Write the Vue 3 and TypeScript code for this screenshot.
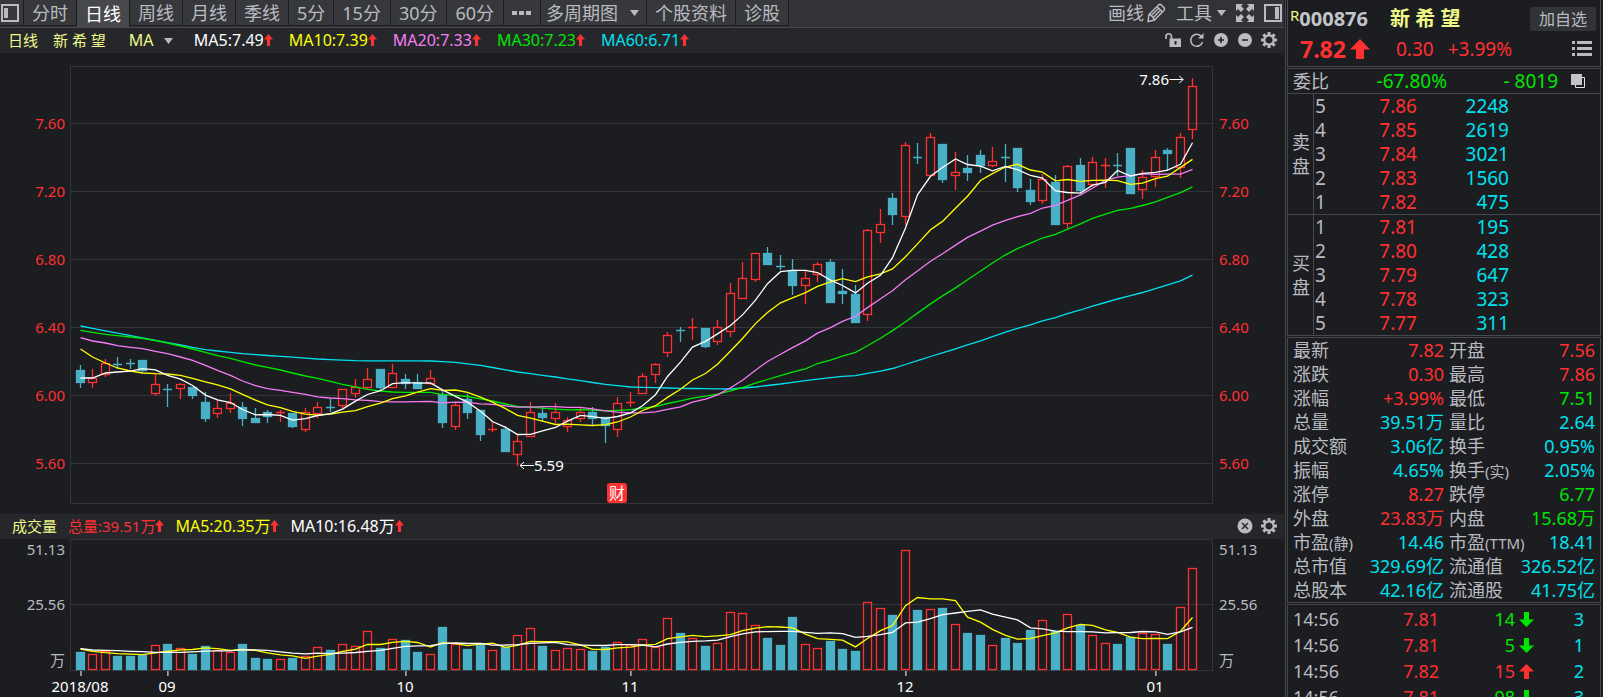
<script setup lang="ts">
type Candle = [up: 0 | 1, high: number, top: number, bottom: number, low: number]

const periods = ['分时', '日线', '周线', '月线', '季线', '5分', '15分', '30分', '60分']
const activePeriod = '日线'

const averages = [
  { text: 'MA5:7.49', tone: 'white' },
  { text: 'MA10:7.39', tone: 'yellow' },
  { text: 'MA20:7.33', tone: 'violet' },
  { text: 'MA30:7.23', tone: 'green' },
  { text: 'MA60:6.71', tone: 'cyan' },
]

// One entry per trading day, in plot units (y grows downwards).
const candles: Candle[] = [
  [0, 365, 370, 383, 388], [1, 369, 378, 383, 388], [1, 359, 363, 375, 377], [0, 357, 364, 365, 369],
  [0, 359, 363, 364, 369], [0, 360, 360, 371, 372], [1, 374, 384, 394, 396], [0, 384, 389, 390, 407],
  [1, 383, 384, 389, 399], [0, 387, 387, 396, 399], [0, 392, 402, 419, 422], [1, 400, 408, 414, 418],
  [1, 393, 403, 409, 413], [0, 402, 407, 419, 426], [0, 408, 418, 423, 423], [0, 410, 412, 417, 423],
  [1, 410, 412, 413, 422], [0, 413, 413, 427, 428], [1, 408, 412, 430, 432], [1, 402, 407, 414, 418],
  [0, 399, 407, 408, 412], [1, 389, 389, 406, 408], [1, 379, 387, 394, 398], [1, 368, 379, 388, 389],
  [0, 369, 369, 388, 390], [1, 364, 373, 388, 388], [0, 374, 379, 384, 389], [0, 374, 382, 389, 389],
  [1, 370, 378, 384, 385], [0, 391, 394, 423, 428], [1, 402, 405, 427, 430], [0, 394, 399, 413, 419],
  [0, 410, 410, 435, 441], [1, 421, 429, 430, 432], [0, 426, 429, 452, 452], [1, 435, 441, 455, 466],
  [1, 402, 412, 437, 437], [0, 407, 413, 418, 422], [1, 403, 412, 419, 423], [1, 417, 420, 427, 432],
  [1, 407, 412, 419, 422], [0, 407, 412, 419, 425], [0, 417, 417, 426, 443], [1, 397, 403, 430, 437],
  [1, 392, 402, 403, 407], [1, 373, 376, 394, 394], [1, 363, 364, 375, 383], [1, 332, 335, 353, 357],
  [0, 327, 330, 331, 342], [1, 318, 327, 328, 340], [0, 328, 328, 347, 348], [1, 320, 327, 342, 345],
  [1, 283, 293, 332, 337], [1, 262, 278, 299, 299], [1, 253, 253, 280, 282], [0, 247, 253, 265, 265],
  [0, 255, 266, 267, 270], [0, 259, 270, 286, 295], [1, 271, 278, 286, 304], [1, 262, 264, 275, 282],
  [0, 259, 262, 303, 303], [0, 269, 291, 294, 304], [0, 285, 294, 323, 323], [1, 229, 230, 315, 321],
  [1, 209, 224, 233, 243], [0, 193, 198, 215, 225], [1, 142, 145, 217, 225], [0, 143, 157, 158, 164],
  [1, 133, 137, 176, 176], [0, 144, 144, 180, 183], [1, 152, 172, 176, 190], [0, 155, 168, 173, 181],
  [0, 150, 155, 166, 173], [1, 147, 161, 166, 167], [0, 144, 157, 158, 182], [0, 148, 148, 188, 192],
  [0, 179, 190, 202, 205], [1, 174, 179, 201, 204], [0, 175, 182, 225, 225], [1, 165, 166, 224, 229],
  [0, 158, 165, 191, 193], [1, 157, 162, 185, 187], [1, 158, 165, 166, 188], [0, 153, 165, 166, 176],
  [0, 148, 148, 194, 194], [1, 170, 177, 190, 199], [1, 150, 157, 177, 187], [0, 148, 150, 154, 171],
  [1, 133, 137, 168, 178], [1, 78, 86, 130, 139],
]

// Top of each volume bar, in thirds of a plot unit.
const volumeTops = [
  457, 462, 455, 469, 468, 466, 436, 433, 445, 463, 440, 450, 457, 433, 475, 479, 478, 474, 468, 443,
  452, 434, 440, 395, 446, 419, 420, 457, 464, 381, 434, 448, 434, 451, 442, 406, 386, 439, 452, 446,
  449, 453, 442, 427, 437, 419, 441, 355, 400, 415, 438, 429, 338, 341, 377, 414, 435, 351, 434, 445,
  424, 448, 453, 308, 326, 347, 152, 330, 328, 325, 374, 400, 405, 437, 415, 431, 390, 361, 395, 342,
  376, 406, 430, 433, 412, 399, 403, 432, 322, 206,
]

const centre = (i: number) => Math.floor(80 + i * 12.5)

// Moving average; the lead covers the days whose window starts before the first bar.
function average(values: number[], span: number, lead: number[]) {
  return values.map((_, i) =>
    i < span - 1 ? lead[i] : values.slice(i - span + 1, i + 1).reduce((a, b) => a + b, 0) / span,
  )
}

function spread(knots: [number, number][]) {
  const out: number[] = []
  for (let k = 0; k < knots.length - 1; k++) {
    const [a, ya] = knots[k]
    const [b, yb] = knots[k + 1]
    for (let i = a; i < b; i++) out[i] = ya + ((yb - ya) * (i - a)) / (b - a)
  }
  return out
}

const toPoints = (ys: number[]) => ys.map((y, i) => `${centre(i) + 0.5},${y.toFixed(1)}`).join(' ')

const closes = candles.map(([up, , top, bottom]) => (up ? top : bottom) + 0.5)
const ma60Lead = spread([
  [0, 326], [5, 338], [10, 349.7], [13, 353.7], [19, 359], [22, 360.7], [28, 361], [30, 362.3], [32, 365.3],
  [35, 372], [38, 377], [42, 384.3], [44, 387], [48, 388.3], [52, 389], [54, 387], [56, 384], [59, 379],
])
const priceLines = [
  { tone: 'cyan', points: toPoints(average(closes, 60, ma60Lead)) },
  {
    tone: 'green',
    points: toPoints(average(closes, 30, [
      330.3, 332.3, 334.3, 335.7, 337, 338.3, 340.7, 343, 346, 349, 352.3, 355.7, 358.3, 361.7, 365, 367.3,
      370, 373, 376, 378.3, 381.3, 384.3, 386.9, 389.3, 391, 392, 392.3, 392.3, 392.3,
    ])),
  },
  {
    tone: 'violet',
    points: toPoints(average(closes, 20, [
      337.7, 341, 343, 345.7, 347.3, 348.7, 351.3, 353.7, 357, 360.3, 365.3, 370.3, 375.3, 381, 385.7, 388.7,
      390.3, 392.3, 394.3,
    ])),
  },
  { tone: 'yellow', points: toPoints(average(closes, 10, [349, 357, 363, 368, 371, 373, 373.7, 374, 375.3])) },
  { tone: 'white', points: toPoints(average(closes, 5, [378, 378, 373, 372])) },
]
const volumeYs = volumeTops.map((v) => 500 + v / 3)
const volumeLines = [
  { tone: 'yellow', points: toPoints(average(volumeYs, 5, [649, 651.3, 652.7, 653.7])) },
  { tone: 'white', points: toPoints(average(volumeYs, 10, [648.7, 650, 650.3, 650.7, 651.3, 651.7, 652.3, 652.3, 652.3])) },
]

const priceTicks = [
  { label: '7.60', y: 123 }, { label: '7.20', y: 191 }, { label: '6.80', y: 259 },
  { label: '6.40', y: 327 }, { label: '6.00', y: 395 }, { label: '5.60', y: 463 },
]
const volumeTicks = [
  { label: '51.13', y: 549 }, { label: '25.56', y: 604 }, { label: '万', y: 660 },
]
const months = [
  { label: '2018/08', i: 0 }, { label: '09', i: 7 }, { label: '10', i: 26 },
  { label: '11', i: 44 }, { label: '12', i: 66 }, { label: '01', i: 86 },
]
const px = (x: number) => `${((x - 70) / 1143) * 100}%`
const py = (y: number) => `${((y - 53) / 461) * 100}%`
const vy = (y: number) => `${((y - 539) / 132) * 100}%`

const books = [
  { side: '卖盘', rows: [['5', '7.86', '2248'], ['4', '7.85', '2619'], ['3', '7.84', '3021'], ['2', '7.83', '1560'], ['1', '7.82', '475']] },
  { side: '买盘', rows: [['1', '7.81', '195'], ['2', '7.80', '428'], ['3', '7.79', '647'], ['4', '7.78', '323'], ['5', '7.77', '311']] },
]

const stats: { name: string; note?: string; value: string; tone: string }[][] = [
  [{ name: '最新', value: '7.82', tone: 'red' }, { name: '开盘', value: '7.56', tone: 'red' }],
  [{ name: '涨跌', value: '0.30', tone: 'red' }, { name: '最高', value: '7.86', tone: 'red' }],
  [{ name: '涨幅', value: '+3.99%', tone: 'red' }, { name: '最低', value: '7.51', tone: 'green' }],
  [{ name: '总量', value: '39.51万', tone: 'cyan' }, { name: '量比', value: '2.64', tone: 'cyan' }],
  [{ name: '成交额', value: '3.06亿', tone: 'cyan' }, { name: '换手', value: '0.95%', tone: 'cyan' }],
  [{ name: '振幅', value: '4.65%', tone: 'cyan' }, { name: '换手', note: '(实)', value: '2.05%', tone: 'cyan' }],
  [{ name: '涨停', value: '8.27', tone: 'red' }, { name: '跌停', value: '6.77', tone: 'green' }],
  [{ name: '外盘', value: '23.83万', tone: 'red' }, { name: '内盘', value: '15.68万', tone: 'green' }],
  [{ name: '市盈', note: '(静)', value: '14.46', tone: 'cyan' }, { name: '市盈', note: '(TTM)', value: '18.41', tone: 'cyan' }],
  [{ name: '总市值', value: '329.69亿', tone: 'cyan' }, { name: '流通值', value: '326.52亿', tone: 'cyan' }],
  [{ name: '总股本', value: '42.16亿', tone: 'cyan' }, { name: '流通股', value: '41.75亿', tone: 'cyan' }],
]

const ticks = [
  { time: '14:56', price: '7.81', volume: '14', up: false, count: '3' },
  { time: '14:56', price: '7.81', volume: '5', up: false, count: '1' },
  { time: '14:56', price: '7.82', volume: '15', up: true, count: '2' },
  { time: '14:56', price: '7.81', volume: '98', up: false, count: '3' },
]
const gearTeeth = [0, 45, 90, 135, 180, 225, 270, 315]
</script>

<template>
  <div class="app">
    <main class="main">
      <nav class="toolbar">
        <button class="tab tab-icon" aria-label="left panel">
          <svg width="20" height="20" viewBox="0 0 20 20"><rect x="2" y="2" width="16" height="16" fill="none" stroke="#b9bbc0" stroke-width="2" /><rect x="4" y="5" width="4" height="10" fill="#b9bbc0" /></svg>
        </button>
        <button v-for="p in periods" :key="p" class="tab" :class="{ active: p === activePeriod, minutes: p.length > 2 }">{{ p }}</button>
        <button class="tab tab-more" aria-label="more">
          <svg width="20" height="6" viewBox="0 0 20 6" fill="#b9bbc0"><path d="M0 1h5v4H0zM7 1h5v4H7zM14 1h5v4h-5z" /></svg>
        </button>
        <label class="tab pick multi">
          <select aria-label="multi period"><option>多周期图</option></select>
          <svg class="caret" width="9" height="6" viewBox="0 0 9 6"><path d="M0 0h9L4.500 6z" fill="#b9bbc0" /></svg>
        </label>
        <button class="tab">个股资料</button>
        <button class="tab">诊股</button>
        <div class="tools">
          <button class="tool draw">画线
            <svg width="20" height="20" viewBox="0 0 20 20" fill="none" stroke="#b9bbc0" stroke-width="1.500"><path d="M2 18.500l1-7L12.500 2q1.500-1.200 2.800 0l2.600 2.600q1.200 1.300 0 2.800L8.500 17z M3 11.500q3 .5 5.500 5.500 M11 3.500l5.500 5.500 M5.300 12.500l7.700-7.500 M7.300 14.500l7.700-7.700" /></svg>
          </button>
          <button class="tool tool-menu" aria-haspopup="menu">工具
            <svg width="9" height="6" viewBox="0 0 9 6"><path d="M0 0h9L4.500 6z" fill="#b9bbc0" /></svg>
          </button>
          <button class="tool" aria-label="full screen">
            <svg width="18" height="18" viewBox="0 0 18 18" fill="#b9bbc0"><path d="M0 0h7L5 2l3 3-3 3-3-3-2 2zM18 0v7l-2-2-3 3-3-3 3-3-2-2zM0 18v-7l2 2 3-3 3 3-3 3 2 2zM18 18h-7l2-2-3-3 3-3 3 3 2-2z" /></svg>
          </button>
          <button class="tool" aria-label="right panel">
            <svg width="18" height="18" viewBox="0 0 18 18"><rect x="1" y="1" width="16" height="16" fill="none" stroke="#b9bbc0" stroke-width="2" /><rect x="11" y="3" width="4" height="12" fill="#b9bbc0" /></svg>
          </button>
        </div>
      </nav>

      <header class="legend">
        <span class="pale">日线</span>
        <span class="pale stock">新 希 望</span>
        <label class="pick ma-pick">
          <select aria-label="indicator"><option>MA</option></select>
          <svg class="caret" width="9" height="6" viewBox="0 0 9 6"><path d="M0 0h9L4.500 6z" fill="#b9bbc0" /></svg>
        </label>
        <ul class="averages">
          <li v-for="a in averages" :key="a.text" :class="a.tone">{{ a.text }}<svg class="up" width="9" height="12" viewBox="0 0 9 12"><path d="M4.500 0L9 5.500H6V12H3V5.500H0z" fill="#ff3030" /></svg></li>
        </ul>
        <div class="chart-tools">
          <button aria-label="unlock"><svg width="16" height="16" viewBox="0 0 16 16"><path d="M1 7V4.500a2.500 2.500 0 0 1 5.500 0V7" fill="none" stroke="#b9bbc0" stroke-width="1.700" /><path d="M4.500 6.500H16V15H4.500z" fill="#b9bbc0" /><path d="M9.500 9h2v3.500h-2z" fill="#26272b" /></svg></button>
          <button aria-label="refresh"><svg width="16" height="16" viewBox="0 0 16 16"><path d="M12 4A6 6 0 1 0 13.500 10" fill="none" stroke="#b9bbc0" stroke-width="1.500" /><path d="M14.500 1v5.500H9z" fill="#b9bbc0" /></svg></button>
          <button aria-label="zoom in"><svg width="16" height="16" viewBox="0 0 16 16"><circle cx="8" cy="8" r="7" fill="#b9bbc0" /><path d="M5 8h6M8 5v6" stroke="#26272b" stroke-width="1.600" /></svg></button>
          <button aria-label="zoom out"><svg width="16" height="16" viewBox="0 0 16 16"><circle cx="8" cy="8" r="7" fill="#b9bbc0" /><path d="M5 8h6" stroke="#26272b" stroke-width="1.600" /></svg></button>
          <button aria-label="settings"><svg width="16" height="16" viewBox="-8 -8 16 16"><circle r="4.700" fill="none" stroke="#b9bbc0" stroke-width="2.200" /><rect v-for="g in gearTeeth" :key="g" x="-1.500" y="-8" width="3" height="3" fill="#b9bbc0" :transform="`rotate(${g})`" /></svg></button>
        </div>
      </header>

      <section class="panel price-panel">
        <div class="axis left red">
          <span v-for="t in priceTicks" :key="t.label" :style="{ top: py(t.y) }">{{ t.label }}</span>
        </div>
        <div class="plot">
          <svg class="canvas" viewBox="70 53 1143 461" preserveAspectRatio="none">
            <g class="grid">
              <path v-for="t in priceTicks" :key="t.label" :d="`M70 ${t.y + 0.5}H1213`" />
              <path d="M70.500 66.500H1212.500V503.500H70.500z" />
            </g>
            <g v-for="(c, i) in candles" :key="i" :class="c[0] ? 'rise' : 'fall'">
              <path v-if="c[3] - c[2] < 2" :d="`M${centre(i) - 4} ${c[2] + 0.5}h9M${centre(i) + 0.5} ${c[1]}V${c[4]}`" />
              <template v-else>
                <path :d="`M${centre(i) + 0.5} ${c[1]}V${c[2]}M${centre(i) + 0.5} ${c[3]}V${c[4]}`" />
                <rect :x="centre(i) - 3.5" :y="c[2] + 0.5" width="8" :height="c[3] - c[2] - 1" />
              </template>
            </g>
            <polyline v-for="l in priceLines" :key="l.tone" class="line" :class="l.tone" :points="l.points" />
          </svg>
          <span class="mark high" :style="{ left: px(1184), top: py(79) }">7.86<svg width="15" height="9" viewBox="0 0 15 9"><path d="M0 4.500h14M10 1l4 3.500-4 3.500" fill="none" stroke="#fff" /></svg></span>
          <span class="mark low" :style="{ left: px(519), top: py(465) }"><svg width="15" height="9" viewBox="0 0 15 9"><path d="M15 4.500H1M5 1L1 4.500 5 8" fill="none" stroke="#fff" /></svg>5.59</span>
          <button class="report" :style="{ left: px(617), top: py(493) }">财</button>
        </div>
        <div class="axis right red">
          <span v-for="t in priceTicks" :key="t.label" :style="{ top: py(t.y) }">{{ t.label }}</span>
        </div>
      </section>

      <header class="legend volume-legend">
        <span class="pale">成交量</span>
        <span class="red total">总量:39.51万<svg class="up" width="9" height="12" viewBox="0 0 9 12"><path d="M4.500 0L9 5.500H6V12H3V5.500H0z" fill="#ff3030" /></svg></span>
        <span class="yellow">MA5:20.35万<svg class="up" width="9" height="12" viewBox="0 0 9 12"><path d="M4.500 0L9 5.500H6V12H3V5.500H0z" fill="#ff3030" /></svg></span>
        <span class="white">MA10:16.48万<svg class="up" width="9" height="12" viewBox="0 0 9 12"><path d="M4.500 0L9 5.500H6V12H3V5.500H0z" fill="#ff3030" /></svg></span>
        <div class="chart-tools">
          <button aria-label="close"><svg width="16" height="16" viewBox="0 0 16 16"><circle cx="8" cy="8" r="7.500" fill="#b9bbc0" /><path d="M5 5l6 6M11 5l-6 6" stroke="#26272b" stroke-width="1.500" /></svg></button>
          <button aria-label="settings"><svg width="16" height="16" viewBox="-8 -8 16 16"><circle r="4.700" fill="none" stroke="#b9bbc0" stroke-width="2.200" /><rect v-for="g in gearTeeth" :key="g" x="-1.500" y="-8" width="3" height="3" fill="#b9bbc0" :transform="`rotate(${g})`" /></svg></button>
        </div>
      </header>

      <section class="panel volume-panel">
        <div class="axis left">
          <span v-for="t in volumeTicks" :key="t.label" :style="{ top: vy(t.y) }">{{ t.label }}</span>
        </div>
        <div class="plot">
          <svg class="canvas" viewBox="70 539 1143 132" preserveAspectRatio="none">
            <g class="grid"><path d="M70 604.500H1213M70.500 539.500H1212.500V670.500H70.500z" /></g>
            <rect
              v-for="(y, i) in volumeYs" :key="i" :class="candles[i][0] ? 'rise' : 'fall'"
              :x="centre(i) - 3.5" :y="Math.floor(y) + 0.5" width="8" :height="669 - Math.floor(y)"
            />
            <polyline v-for="l in volumeLines" :key="l.tone" class="line" :class="l.tone" :points="l.points" />
          </svg>
        </div>
        <div class="axis right">
          <span v-for="t in volumeTicks" :key="t.label" :style="{ top: vy(t.y) }">{{ t.label }}</span>
        </div>
      </section>
      <footer class="dates">
        <span v-for="m in months" :key="m.label" :style="{ left: px(centre(m.i)) }">{{ m.label }}</span>
      </footer>
    </main>

    <aside class="side">
      <section class="box quote">
        <div class="quote-row">
          <sup class="pale">R</sup><strong class="code">000876</strong><strong class="name pale">新 希 望</strong>
          <button class="add">加自选</button>
        </div>
        <div class="quote-row second">
          <strong class="last red">7.82</strong>
          <svg width="20" height="20" viewBox="0 0 20 20"><path d="M10 0l10 10.500h-6V20H6v-9.500H0z" fill="#ff3030" /></svg>
          <span class="red change">0.30</span><span class="red">+3.99%</span>
          <button class="list" aria-label="list"><svg width="20" height="18" viewBox="0 0 20 18" fill="#b9bbc0"><path d="M0 1h3v3H0zM5 1h15v3H5zM0 7h3v3H0zM5 7h15v3H5zM0 13h3v3H0zM5 13h15v3H5z" /></svg></button>
        </div>
      </section>

      <section class="box book">
        <div class="ratio">
          <span class="ratio-name">委比</span><span class="green ratio-value">-67.80%</span><span class="green ratio-diff">- 8019</span>
          <button aria-label="copy"><svg width="14" height="14" viewBox="0 0 14 14"><path d="M4.500 10.500v3h9v-10h-3" fill="none" stroke="#e0e0e0" /><rect width="11" height="11" fill="#c3c5ca" /></svg></button>
        </div>
        <div v-for="b in books" :key="b.side" class="side-block">
          <div class="side-name">{{ b.side }}</div>
          <table>
            <tbody>
              <tr v-for="r in b.rows" :key="r[0]"><th scope="row">{{ r[0] }}</th><td class="red">{{ r[1] }}</td><td class="cyan">{{ r[2] }}</td><td></td></tr>
            </tbody>
          </table>
        </div>
      </section>

      <section class="box stats">
        <table>
          <tbody>
            <tr v-for="row in stats" :key="row[0].name + row[0].note">
              <template v-for="s in row" :key="s.name">
                <th scope="row">{{ s.name }}<small v-if="s.note">{{ s.note }}</small></th>
                <td :class="s.tone">{{ s.value }}</td>
              </template>
            </tr>
          </tbody>
        </table>
      </section>

      <section class="box deals">
        <table>
          <tbody>
            <tr v-for="(t, i) in ticks" :key="i">
              <th scope="row">{{ t.time }}</th>
              <td class="red">{{ t.price }}</td>
              <td :class="t.up ? 'red' : 'green'">{{ t.volume }}</td>
              <td class="dir">
                <svg width="15" height="15" viewBox="0 0 15 15">
                  <path v-if="t.up" d="M7.500 0L15 7.500h-5V15H5V7.500H0z" fill="#ff3030" />
                  <path v-else d="M7.500 15L15 7.500h-5V0H5v7.500H0z" fill="#00e600" />
                </svg>
              </td>
              <td class="cyan">{{ t.count }}</td>
            </tr>
          </tbody>
        </table>
      </section>
    </aside>
  </div>
</template>

<style>
body { margin: 0; background: #1c1d21; }
</style>

<style scoped>
.app {
  display: flex; height: 100vh; overflow: hidden; background: #1c1d21; color: #b9bbc0;
  font-family: "Noto Sans", "Noto Sans CJK SC", sans-serif; font-size: 18px; line-height: 24px;
}
* { box-sizing: border-box; }
button, select { font: inherit; color: inherit; background: none; border: 0; padding: 0; margin: 0; appearance: none; white-space: nowrap; }
svg { display: block; }
table { border-collapse: collapse; table-layout: fixed; width: 100%; }
th, td { padding: 0; font-weight: 400; text-align: left; white-space: nowrap; }
td { text-align: right; }

.red { color: #ff3030; }
.green { color: #00e600; }
.cyan { color: #00e1f0; }
.yellow { color: #ffff00; }
.violet { color: #f57cf5; }
.white { color: #ffffff; }
.pale { color: #f0f888; }

.main { flex: 1; min-width: 0; display: flex; flex-direction: column; padding-right: 1px; border-right: 1px solid #47484c; }

.toolbar { display: flex; height: 28px; padding-bottom: 1px; background: #323337; border-bottom: 1px solid #47484c; }
.tab {
  display: flex; align-items: center; height: 26px; padding: 0 8px; background: #37383c;
  border-right: 1px solid #1c1d21; border-bottom: 1px solid #1c1d21;
}
.tab-icon { padding: 0 3px 0 0; }
.tab.active { background: #47484c; color: #ffffff; height: 27px; border-bottom: 0; }
.tab.minutes { padding: 0 9px 0 8px; }
.pick { position: relative; }
.pick .caret { position: absolute; right: 7px; top: 10px; pointer-events: none; }
.multi { padding: 0 0 0 5px; }
.multi select { width: 100px; }
.tools { margin-left: auto; display: flex; align-items: center; gap: 10px; padding-right: 2px; }
.tool { display: flex; align-items: center; }
.draw { gap: 2px; }
.tool-menu { gap: 5px; }

.legend { display: flex; align-items: center; height: 25px; padding: 0 6px 1px 8px; background: #26272b; font-size: 16px; }
.legend .pale { font-size: 15px; }
.stock { margin-left: 15px; }
.ma-pick { margin-left: 23px; color: #f0f888; }
.ma-pick select { width: 44px; }
.ma-pick .caret { right: 0; }
.averages { display: flex; gap: 16px; list-style: none; margin: 0 0 0 21px; padding: 0; }
.averages li { display: flex; align-items: center; }
.up { flex: none; }
.chart-tools { margin-left: auto; display: flex; gap: 8px; padding-right: 1px; }
.volume-legend { padding-left: 12px; gap: 11px; }
.volume-legend span { display: flex; align-items: center; }
.volume-legend .total { font-size: 15px; }

.panel { display: flex; min-height: 0; }
.price-panel { flex: 461 1 0; }
.volume-panel { flex: 132 1 0; }
.axis { position: relative; width: 70px; font-size: 15px; }
.axis.right { width: 71px; }
.axis span { position: absolute; transform: translateY(-50%); line-height: 20px; }
.axis.left span { right: 5px; }
.axis.right span { left: 6px; }
.plot { position: relative; flex: 1; min-width: 0; }
.canvas { position: absolute; width: 100%; height: 100%; }
.grid path { fill: none; stroke: #333438; shape-rendering: crispEdges; }
.rise { fill: none; stroke: #ff3030; stroke-width: 1.3; }
.fall { fill: #49b0c6; stroke: #49b0c6; stroke-width: 1.3; }
.line { fill: none; stroke: currentColor; stroke-width: 1.3; }
.mark { position: absolute; display: flex; align-items: center; color: #ffffff; font-size: 15px; line-height: 20px; }
.mark.high { transform: translate(-100%, -50%); }
.mark.low { transform: translateY(-50%); }
.report {
  position: absolute; transform: translate(-50%, -50%); width: 20px; height: 20px; border-radius: 3px;
  background: #ff3030; color: #ffffff; font-size: 16px; line-height: 20px; text-align: center;
}
.dates { position: relative; height: 26px; margin: 0 71px 0 70px; color: #ffffff; font-size: 15px; line-height: 20px; }
.dates span { position: absolute; top: 0; padding-top: 5px; transform: translateX(-50%); }
.dates span::before { content: ""; position: absolute; left: 50%; top: 0; width: 1px; height: 5px; background: #ffffff; }

.side { flex: none; width: 317px; display: flex; flex-direction: column; gap: 1px; padding: 0 2px 0 1px; }
.box { border: 1px solid #47484c; flex: none; }
.quote { height: 67px; border-top: 0; padding: 5px 4px 0 2px; }
.quote-row { display: flex; align-items: center; height: 28px; font-size: 20px; }
.quote-row sup { align-self: flex-start; font-size: 15px; line-height: 20px; }
.code { color: #c3c5ca; }
.name { margin-left: 22px; }
.add { margin-left: auto; width: 66px; height: 24px; border-radius: 2px; background: #323337; font-size: 16px; line-height: 24px; }
.second { height: 32px; padding-left: 10px; font-size: 19px; }
.last { font-size: 23px; margin-right: 4px; }
.change { margin: 0 14px 0 26px; }
.list { margin: 0 4px 0 auto; }

.ratio { display: flex; align-items: center; height: 24px; padding: 0 15px 0 5px; font-size: 19px; white-space: nowrap; }
.ratio-name { font-size: 18px; }
.ratio-value { margin-left: auto; }
.ratio-diff { width: 111px; text-align: right; margin-right: 13px; }
.side-block { display: flex; border-top: 1px solid #47484c; }
.side-name { width: 26px; padding: 36px 4px 0; border-right: 1px solid #47484c; line-height: 24px; white-space: normal; word-break: break-all; }
.side-block table { flex: 1; width: auto; }
.side-block tr { height: 24px; font-size: 19px; }
.side-block th { width: 24px; padding-left: 1px; }
.side-block td:nth-child(2) { width: 79px; }
.side-block td:nth-child(3) { width: 92px; }

.stats th { width: 62px; padding-left: 5px; }
.stats tr { height: 24px; }
.stats td:nth-child(4) { padding-right: 5px; }
.stats th small { font-size: 15px; line-height: 15px; }

.deals { flex: 1 0 auto; border-bottom: 0; padding-top: 1px; }
.deals tr { height: 26px; }
.deals th { padding-left: 5px; width: 76px; }
.deals td:nth-child(2) { width: 75px; }
.deals td:nth-child(3) { width: 76px; }
.deals .dir { width: 22px; padding-left: 4px; }
.deals td:nth-child(5) { padding-right: 16px; }
</style>
